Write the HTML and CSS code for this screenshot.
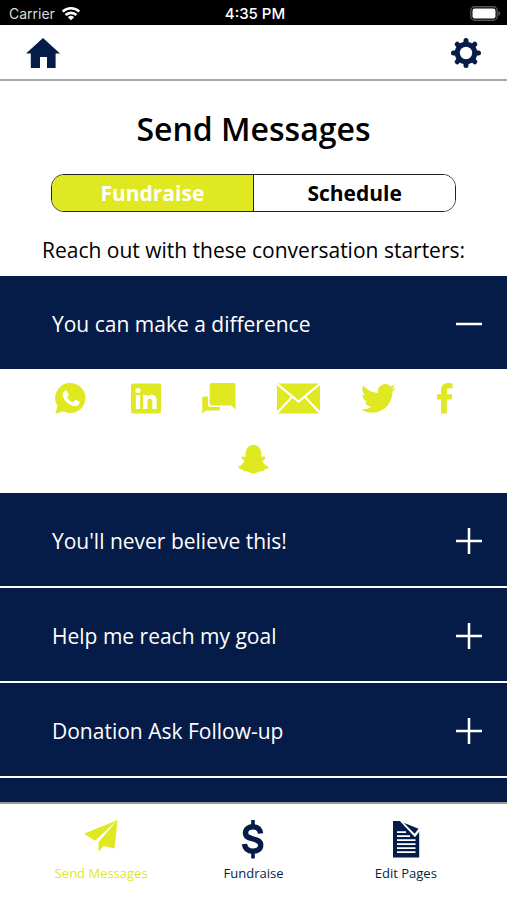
FILE: index.html
```html
<!DOCTYPE html>
<html lang="en">
<head>
<meta charset="utf-8">
<meta name="viewport" content="width=device-width, initial-scale=1">
<title>Send Messages</title>
<link rel="stylesheet" href="styles.css">
</head>
<body>
<div class="status">
  <div class="carrier"><span>Carrier</span>
    <svg width="20" height="15" viewBox="0 0 20 15" fill="none" stroke="#fff" stroke-width="2.6"><path d="M1.7 5.6a12 12 0 0 1 16.6 0M4.6 9a7.8 7.8 0 0 1 10.8 0"/><path d="M10 14.2 6.9 11.2a4.5 4.5 0 0 1 6.2 0z" fill="#fff" stroke="none"/></svg>
  </div>
  <div class="time">4:35 PM</div>
  <div class="battery">
    <svg width="31" height="15" viewBox="0 0 31 15"><rect x=".8" y=".8" width="26.4" height="13.4" rx="4" fill="none" stroke="#555" stroke-width="1.4"/><rect x="2.5" y="2.5" width="23" height="10" rx="2.2" fill="#fff"/><path d="M28.4 5v5c2.4-1 2.4-4 0-5z" fill="#555"/></svg>
  </div>
</div>
<header class="topbar">
  <a class="icon-link" href="#home" aria-label="Home">
    <svg width="34" height="30" viewBox="0 0 34 30" fill="currentColor"><path d="M17 0 34 15.4H29.600V30H21V19H14V30H4.800V15.400H0z"/></svg>
  </a>
  <button class="icon-link" type="button" aria-label="Settings">
    <svg width="30" height="30" viewBox="0 0 30 30"><g stroke="currentColor" stroke-width="5" stroke-linecap="round"><path d="M15 2.500V27.500M2.500 15H27.500M6.200 6.200 23.800 23.800M23.800 6.200 6.200 23.800"/></g><circle cx="15" cy="15" r="11.300" fill="currentColor"/><circle cx="15" cy="15" r="6.200" fill="#fff"/></svg>
  </button>
</header>
<main class="content">
  <h1>Send Messages</h1>
  <div class="segments">
    <button class="segment active" type="button">Fundraise</button>
    <button class="segment" type="button">Schedule</button>
  </div>
  <p class="intro">Reach out with these conversation starters:</p>
  <div class="starters">
    <button class="starter open" type="button" aria-expanded="true"><span>You can make a difference</span>
      <svg width="26" height="26" viewBox="0 0 26 26" stroke="#fff" stroke-width="2.500"><path d="M0 13H26"/></svg></button>
    <div class="shares">
      <a href="#whatsapp" aria-label="WhatsApp"><svg width="31" height="31" viewBox="0 0 31 31"><path fill="currentColor" d="M15.800 0A15 15 0 1 1 8.500 28.300L.3 30.800 2.500 23A15 15 0 0 1 15.800 0z"/><path fill="#fff" d="M9.200 8.600c1.100-1.300 2.300-1.400 3-.2l1.500 3c.3.900-.2 1.500-1.200 2.500-.3.400-.2.700 0 1.100 1.200 2 2.700 3.300 4.800 4.200.5.200.8.100 1.100-.3l1.400-1.600c.4-.5.800-.5 1.400-.2l3 1.500c.7.400.6 1.100.3 2-.7 2-3.200 2.900-5.200 2.500-5.600-1.200-9.700-5-11.300-9.700-.6-2-.2-3.500 1.200-4.800z"/></svg></a>
      <a class="linkedin" href="#linkedin" aria-label="LinkedIn"><svg width="30" height="31" viewBox="0 0 30 31"><rect y=".5" width="30" height="30" rx="2" fill="currentColor"/><g fill="#fff"><circle cx="7" cy="7.500" r="2.600"/><path d="M4.800 12H9.200V26H4.800zM12 12h4.200v2c2.200-3.600 9.500-3.500 9.500 3.600V26h-4.400v-7.500c0-4.200-4.900-4-4.900 0V26H12z"/></g></svg></a>
      <a href="#sms" aria-label="Text message"><svg width="34" height="31" viewBox="0 0 34 31" fill="currentColor"><path d="M9.200 0H32q1.500 0 1.500 1.500V26.500L29.500 22.500H9.200q-1.500 0-1.500-1.500V1.500Q7.700 0 9.200 0z"/><path d="M1.500 13.500H6V21.500Q6 24 8.500 24H18V26q0 1.500-1.500 1.500H4L.3 30.500V15q0-1.500 1.200-1.500z"/></svg></a>
      <a href="#email" aria-label="Email"><svg width="43" height="31" viewBox="0 0 43 31"><path fill="currentColor" d="M0 .5H43V30.500H0z"/><path d="M-1 0 21.500 18.500 44 0M-1 31 15.500 13.500M44 31 27.500 13.500" fill="none" stroke="#fff" stroke-width="2.200"/></svg></a>
      <a href="#twitter" aria-label="Twitter"><svg width="35" height="31" viewBox="0 1.500 24 21" fill="currentColor"><path d="M23.954 4.569a10 10 0 0 1-2.825.775 4.958 4.958 0 0 0 2.163-2.723c-.951.555-2.005.959-3.127 1.184a4.920 4.920 0 0 0-8.384 4.482C7.691 8.094 4.066 6.130 1.640 3.161a4.822 4.822 0 0 0-.666 2.475c0 1.710.870 3.213 2.188 4.096a4.904 4.904 0 0 1-2.228-.616v.061a4.923 4.923 0 0 0 3.946 4.827 4.996 4.996 0 0 1-2.212.085 4.937 4.937 0 0 0 4.604 3.417 9.868 9.868 0 0 1-6.102 2.105c-.390 0-.779-.023-1.170-.067a13.995 13.995 0 0 0 7.557 2.209c9.054 0 13.999-7.496 13.999-13.986 0-.209 0-.420-.015-.630a9.936 9.936 0 0 0 2.460-2.548z"/></svg></a>
      <a href="#facebook" aria-label="Facebook"><svg width="16" height="31" viewBox="0 0 16 31" fill="currentColor"><path d="M4 30.500V16.500H0V11.300H4V7.500C4 2.700 6.700 0 10.800 0 13 0 15.500.3 15.500.3V5.200H12.700C10.600 5.200 9.800 6.400 9.800 8V11.300H15.300L14.500 16.500H9.800V30.500z"/></svg></a>
      <a href="#snapchat" aria-label="Snapchat"><svg width="31" height="31" viewBox="0 0 31 31" fill="currentColor"><path d="M15.500 1C20 1 23.300 4.500 23.300 9.200V12.800C24.500 13 26 12 27 12.800 28 14 26.500 15.500 24.500 16.800 25.500 20 27.500 21.500 30.700 22.700 30.500 24.500 28.500 25 26.500 25.500L25.500 27.300C23.500 27 21.500 27 20 28 18.500 29 17.500 29.500 15.500 29.500S12.500 29 11 28C9.500 27 7.500 27 5.500 27.300L4.500 25.500C2.500 25 .5 24.500 .3 22.700 3.500 21.500 5.500 20 6.500 16.800 4.500 15.500 3 14 4 12.800 5 12 6.500 13 7.700 12.800V9.200C7.700 4.500 11 1 15.500 1z"/></svg></a>
    </div>
    <button class="starter" type="button" aria-expanded="false"><span>You'll never believe this!</span>
      <svg width="26" height="26" viewBox="0 0 26 26" stroke="#fff" stroke-width="2.500"><path d="M0 13H26M13 0V26"/></svg></button>
    <button class="starter" type="button" aria-expanded="false"><span>Help me reach my goal</span>
      <svg width="26" height="26" viewBox="0 0 26 26" stroke="#fff" stroke-width="2.500"><path d="M0 13H26M13 0V26"/></svg></button>
    <button class="starter" type="button" aria-expanded="false"><span>Donation Ask Follow-up</span>
      <svg width="26" height="26" viewBox="0 0 26 26" stroke="#fff" stroke-width="2.500"><path d="M0 13H26M13 0V26"/></svg></button>
  </div>
</main>
<nav class="tabs">
  <a class="tab current" href="#messages"><svg width="34" height="40" viewBox="0 0 34 40" fill="currentColor"><path d="M33.500 1 0 14.800 11 21.800zM33.500 1 14.500 23.200V32.500L20 27 30.500 29.500z"/></svg><span>Send Messages</span></a>
  <a class="tab" href="#fundraise"><svg width="24" height="40" viewBox="0 0 24 40" fill="none" stroke="currentColor"><path d="M19.500 14.500C19 9.800 16 7.800 12 7.800S4.500 10 4.500 14c0 8 15.200 4 15.200 12 0 4-3.200 6.200-7.700 6.200S4 30 3.500 25" stroke-width="5.400"/><path d="M12 1V8M12 32V39.500" stroke-width="3.600"/></svg><span>Fundraise</span></a>
  <a class="tab" href="#pages"><svg width="28" height="40" viewBox="0 0 28 40"><path fill="currentColor" d="M1 2H8.500L23 17 27.200 11.500V38.500H1z"/><path d="M11 3.500 26.500 9.800 22.700 14.800z" fill="currentColor"/><path d="M8.500 1.500 22.900 16.800 27.500 11" fill="none" stroke="#fff" stroke-width="1.800"/><path d="M5 13.200H14M5 17.200H18M5 21.200H23.500M5 25.200H23.500M5 29.200H23.500M5 33.200H23.500" stroke="#fff" stroke-width="1.700"/></svg><span>Edit Pages</span></a>
</nav>
</body>
</html>
```

FILE: styles.css
```css
* { box-sizing: border-box; }

body {
  margin: 0;
  height: 100vh;
  display: flex;
  flex-direction: column;
  background: #fff;
  color: #000;
  font-family: "Open Sans", sans-serif;
}

svg { display: block; flex: none; }

button {
  margin: 0;
  border: 0;
  font-family: inherit;
  cursor: pointer;
}

a { color: inherit; text-decoration: none; }

.status {
  display: grid;
  grid-template-columns: 1fr auto 1fr;
  align-items: center;
  padding: 2px 6px 0 9px;
  height: 25px;
  background: #000;
  color: #fff;
  font: 14px/20px Inter, sans-serif;
}

.carrier { display: flex; align-items: center; gap: 6px; color: #ddd; }
.time { font-size: 15px; font-weight: 500; }
.battery { justify-self: end; }

.topbar {
  display: flex;
  justify-content: space-between;
  align-items: center;
  height: 56px;
  padding: 1px 26px 0;
  border-bottom: 2px solid #a9a9a9;
}

.icon-link { padding: 0; background: none; color: #051c48; }

.content {
  flex: 1;
  min-height: 0;
  display: flex;
  flex-direction: column;
}

h1 {
  margin: 25px 0 22px;
  font-size: 32px;
  line-height: 46px;
  font-weight: 600;
  text-align: center;
}

.segments {
  display: flex;
  flex: none;
  width: 80%;
  height: 38px;
  margin: 0 auto;
  border: 1px solid #222;
  border-radius: 13px;
  overflow: hidden;
}

.segment {
  flex: 1;
  padding: 0;
  background: #fff;
  color: #000;
  font-size: 21px;
  line-height: 36px;
  font-weight: 700;
}

.segment.active {
  background: #dfe821;
  color: #fff;
  border-right: 1px solid #222;
}

.intro {
  margin: 22px 0 10px;
  font-size: 21px;
  line-height: 32px;
  text-align: center;
}

.starters {
  flex: 1;
  min-height: 0;
  background: #061c48;
  overflow: hidden;
}

.starter {
  display: flex;
  justify-content: space-between;
  align-items: center;
  width: 100%;
  height: 95px;
  padding: 2px 25px 0 52px;
  border-bottom: 2px solid #fff;
  background: #061c48;
  color: #fff;
  font-size: 21px;
  line-height: 30px;
  text-align: left;
}

.starter.open { height: 93px; border-bottom: 0; }

.shares {
  display: flex;
  flex-wrap: wrap;
  justify-content: center;
  gap: 30px 41px;
  padding: 14px 48px 18px;
  background: #fff;
  color: #dfe821;
}

.linkedin { padding-left: 4px; }

.tabs {
  display: grid;
  grid-template-columns: repeat(3, 1fr);
  height: 98px;
  padding: 15px 25px 0;
  border-top: 2px solid #999;
  color: #061c48;
}

.tab {
  display: flex;
  flex-direction: column;
  align-items: center;
  gap: 4px;
  font-size: 13px;
  line-height: 20px;
}

.tab.current { color: #dfe821; }
```
